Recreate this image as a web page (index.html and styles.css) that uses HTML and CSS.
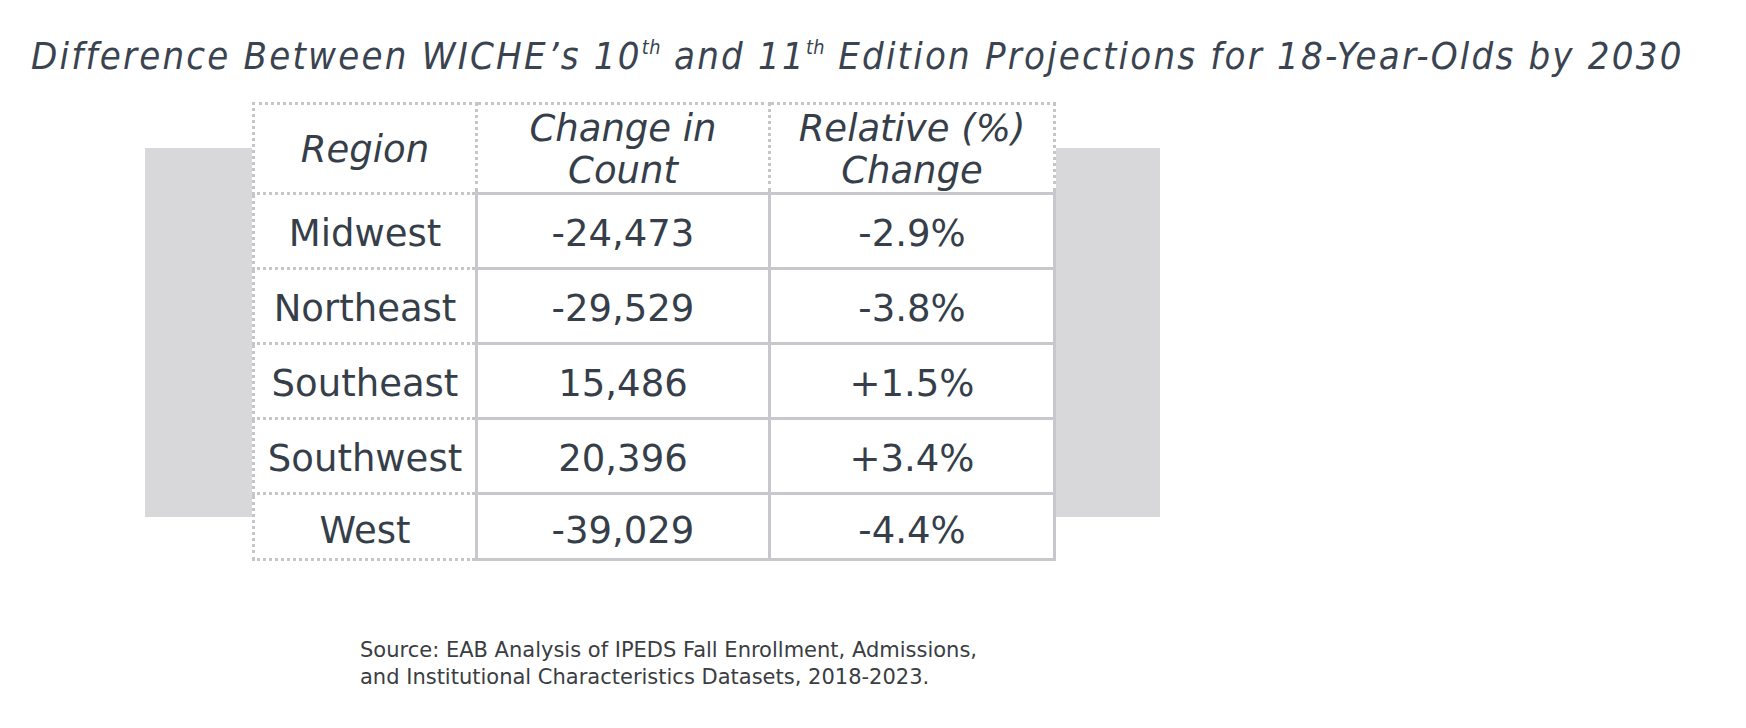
FILE: index.html
```html
<!DOCTYPE html>
<html lang="en">
<head>
<meta charset="utf-8">
<title>WICHE Projections</title>
<link rel="stylesheet" href="styles.css">
</head>
<body>
<h1 class="title">Difference Between WICHE’s 10<sup class="ord">th</sup> and 11<sup class="ord">th</sup> Edition Projections for 18-Year-Olds by 2030</h1>
<div class="chart">
  <div class="backdrop"></div>
  <table class="data">
    <colgroup>
      <col class="c1"><col class="c2"><col class="c3">
    </colgroup>
    <thead>
      <tr class="head">
        <th class="dot">Region</th>
        <th class="dot">Change in<br>Count</th>
        <th class="dot">Relative (%)<br>Change</th>
      </tr>
    </thead>
    <tbody>
      <tr class="row"><td class="dot">Midwest</td><td class="num">-24,473</td><td class="num">-2.9%</td></tr>
      <tr class="row"><td class="dot">Northeast</td><td class="num">-29,529</td><td class="num">-3.8%</td></tr>
      <tr class="row"><td class="dot">Southeast</td><td class="num">15,486</td><td class="num">+1.5%</td></tr>
      <tr class="row"><td class="dot">Southwest</td><td class="num">20,396</td><td class="num">+3.4%</td></tr>
      <tr class="row last"><td class="dot">West</td><td class="num">-39,029</td><td class="num">-4.4%</td></tr>
    </tbody>
  </table>
</div>
<p class="source">Source: EAB Analysis of IPEDS Fall Enrollment, Admissions,<br>and Institutional Characteristics Datasets, 2018-2023.</p>
</body>
</html>
```
FILE: styles.css
```css
html, body {
  margin: 0;
  padding: 0;
  background: #ffffff;
}
body {
  font-family: "DejaVu Sans", Verdana, sans-serif;
  color: #353e49;
}
.title {
  margin: 0;
  padding: 34px 0 0 31px;
  font-family: "DejaVu Sans Condensed", "DejaVu Sans", sans-serif;
  font-stretch: condensed;
  font-style: italic;
  font-weight: normal;
  font-size: 38px;
  letter-spacing: 2.2px;
  line-height: 44px;
  white-space: nowrap;
  color: #3a4350;
}
.ord {
  font-size: 0.52em;
  letter-spacing: 0.5px;
  line-height: 0;
  vertical-align: 0.75em;
}
.chart {
  position: relative;
  margin: 24px 0 0 145px;
  width: 1015px;
}
.backdrop {
  position: absolute;
  left: 0;
  top: 46px;
  width: 1015px;
  height: 369px;
  background: #d8d8da;
}
.data {
  position: relative;
  margin-left: 107px;
  border-collapse: collapse;
  background: #ffffff;
  table-layout: fixed;
  font-size: 37px;
  color: #353e49;
}
.c1 { width: 223px; }
.c2 { width: 293px; }
.c3 { width: 285px; }
.data th, .data td {
  padding: 0;
  text-align: center;
  vertical-align: middle;
}
.data th {
  font-weight: normal;
  font-style: italic;
  line-height: 42px;
  height: 83px;
  padding-top: 3px;
}
.dot {
  border: 3px dotted #c6c6ca;
}
.num {
  border: 3px solid #c8c8cc;
}
.row td {
  height: 67px;
  line-height: 44px;
  padding-top: 5px;
}
.row.last td {
  height: 55px;
  padding-top: 8px;
}
.source {
  margin: 76px 0 0 360px;
  font-family: "DejaVu Sans", sans-serif;
  font-size: 21px;
  line-height: 27px;
  color: #3a3d42;
}
```
